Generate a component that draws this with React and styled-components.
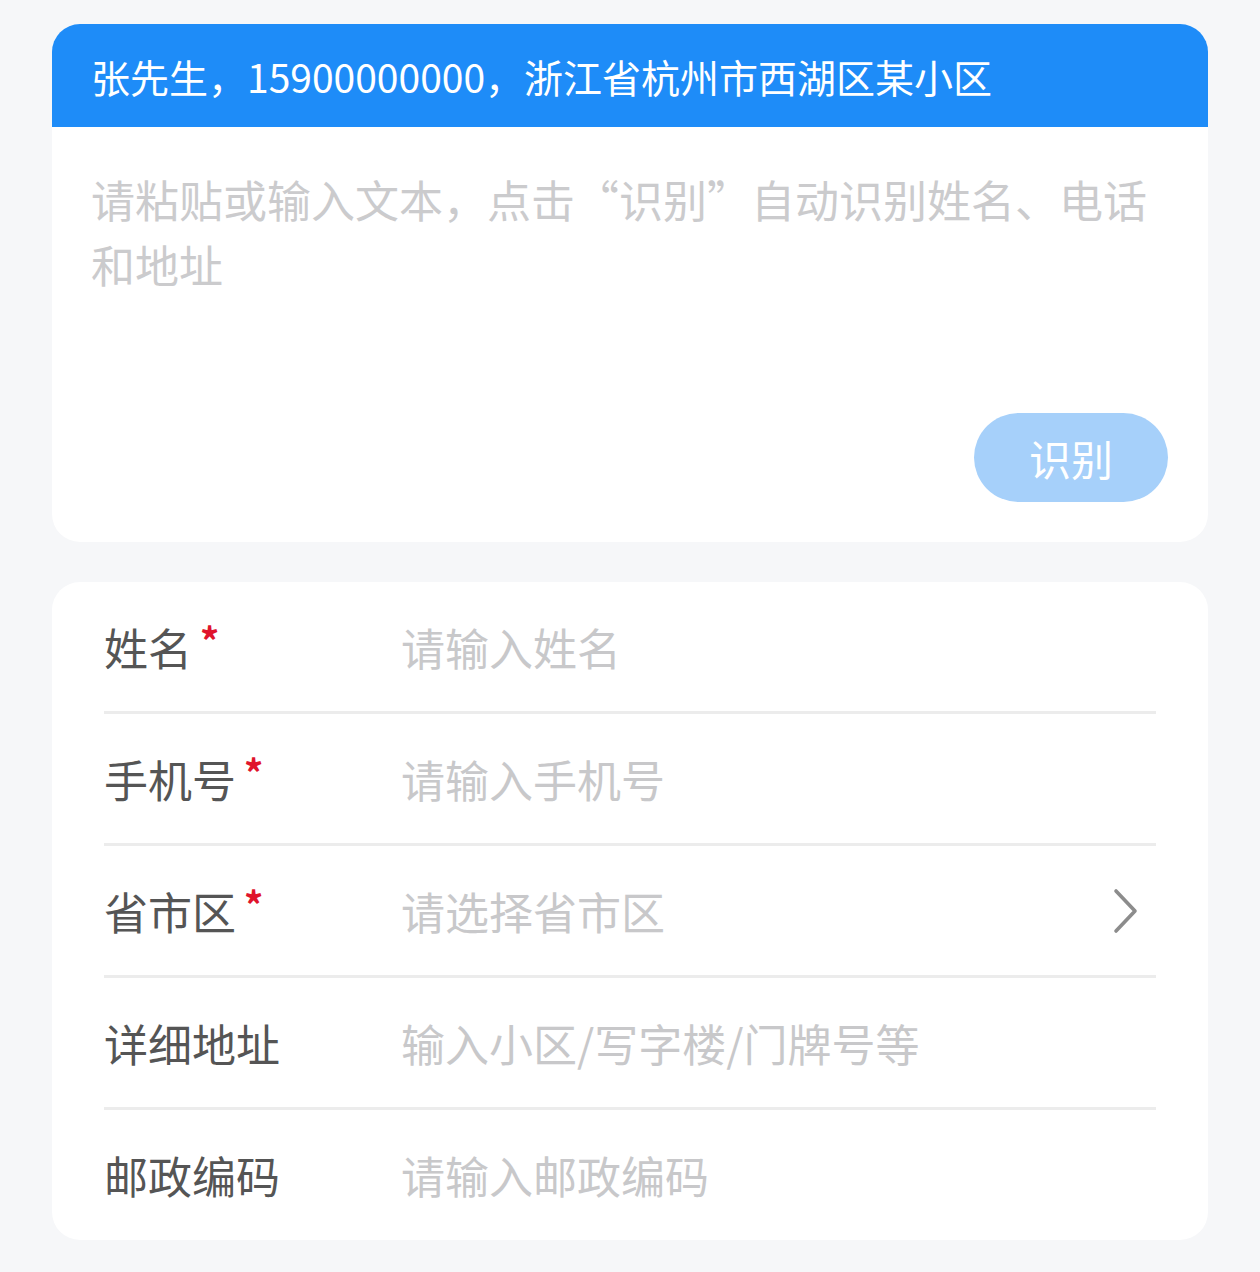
import React from 'react'
import styled, { createGlobalStyle } from 'styled-components'

const GlobalStyle = createGlobalStyle`
  html, body {
    margin: 0;
    padding: 0;
    background: #f6f7f9;
  }
  body {
    font-family: "Noto Sans CJK SC", "Noto Sans", sans-serif;
  }
`

const Page = styled.div`
  display: flex;
  flex-direction: column;
  gap: 40px;
  padding: 24px 52px 34px;
  min-height: 1272px;
  box-sizing: border-box;
`

const Card = styled.div`
  background: #fff;
  border-radius: 28px;
  overflow: hidden;
`

const Banner = styled.div`
  height: 103px;
  background: #1e8cf8;
  color: #fff;
  display: flex;
  align-items: center;
  padding-left: 39px;
  font-size: 39px;
`

const PasteBody = styled.div`
  display: flex;
  flex-direction: column;
  padding: 40px 40px 40px 39px;
`

const PasteArea = styled.textarea`
  border: none;
  outline: none;
  resize: none;
  padding: 0;
  margin: 0;
  height: 246px;
  font-family: inherit;
  font-size: 44px;
  line-height: 65px;
  color: #333;
  background: transparent;
  &::placeholder {
    color: #cbcbcd;
  }
`

const ParseButton = styled.button`
  align-self: flex-end;
  width: 194px;
  height: 89px;
  border: none;
  border-radius: 45px;
  background: #a6d0fa;
  color: #fff;
  font-family: inherit;
  font-size: 42px;
  padding: 0;
`

const FormCard = styled(Card)`
  padding: 0 52px;
`

const Row = styled.div`
  display: flex;
  align-items: center;
  height: ${(p) => (p.$last ? '130px' : '129px')};
  border-bottom: ${(p) => (p.$last ? 'none' : '3px solid #ececec')};
`

const Label = styled.div`
  width: 297px;
  flex-shrink: 0;
  font-size: 44px;
  color: #555;
  display: flex;
  align-items: flex-start;
`

const Star = styled.span`
  color: #e0142c;
  font-size: 38px;
  font-weight: 700;
  line-height: 1;
  margin-left: 8px;
  margin-top: 6px;
`

const Field = styled.input`
  flex: 1;
  border: none;
  outline: none;
  padding: 0;
  font-family: inherit;
  font-size: 44px;
  color: #333;
  background: transparent;
  &::placeholder {
    color: #c8c8ca;
  }
`

const Chevron = styled.svg`
  width: 28px;
  height: 48px;
  margin-right: 16px;
  flex-shrink: 0;
`

const fields = [
  { label: '姓名', req: true, ph: '请输入姓名' },
  { label: '手机号', req: true, ph: '请输入手机号' },
  { label: '省市区', req: true, ph: '请选择省市区', arrow: true },
  { label: '详细地址', ph: '输入小区/写字楼/门牌号等' },
  { label: '邮政编码', ph: '请输入邮政编码' },
]

export default function App() {
  return (
    <>
      <GlobalStyle />
      <Page>
        <Card>
          <Banner>张先生，15900000000，浙江省杭州市西湖区某小区</Banner>
          <PasteBody>
            <PasteArea placeholder="请粘贴或输入文本，点击“识别”自动识别姓名、电话和地址" />
            <ParseButton>识别</ParseButton>
          </PasteBody>
        </Card>
        <FormCard>
          {fields.map((f, i) => (
            <Row key={f.label} $last={i === fields.length - 1}>
              <Label>
                {f.label}
                {f.req && <Star>*</Star>}
              </Label>
              <Field placeholder={f.ph} readOnly={f.arrow} />
              {f.arrow && (
                <Chevron viewBox="0 0 28 48">
                  <path d="M4 4 L23 24 L4 44" fill="none" stroke="#8c8c8c" strokeWidth="3.6" strokeLinecap="round" strokeLinejoin="round" />
                </Chevron>
              )}
            </Row>
          ))}
        </FormCard>
      </Page>
    </>
  )
}
